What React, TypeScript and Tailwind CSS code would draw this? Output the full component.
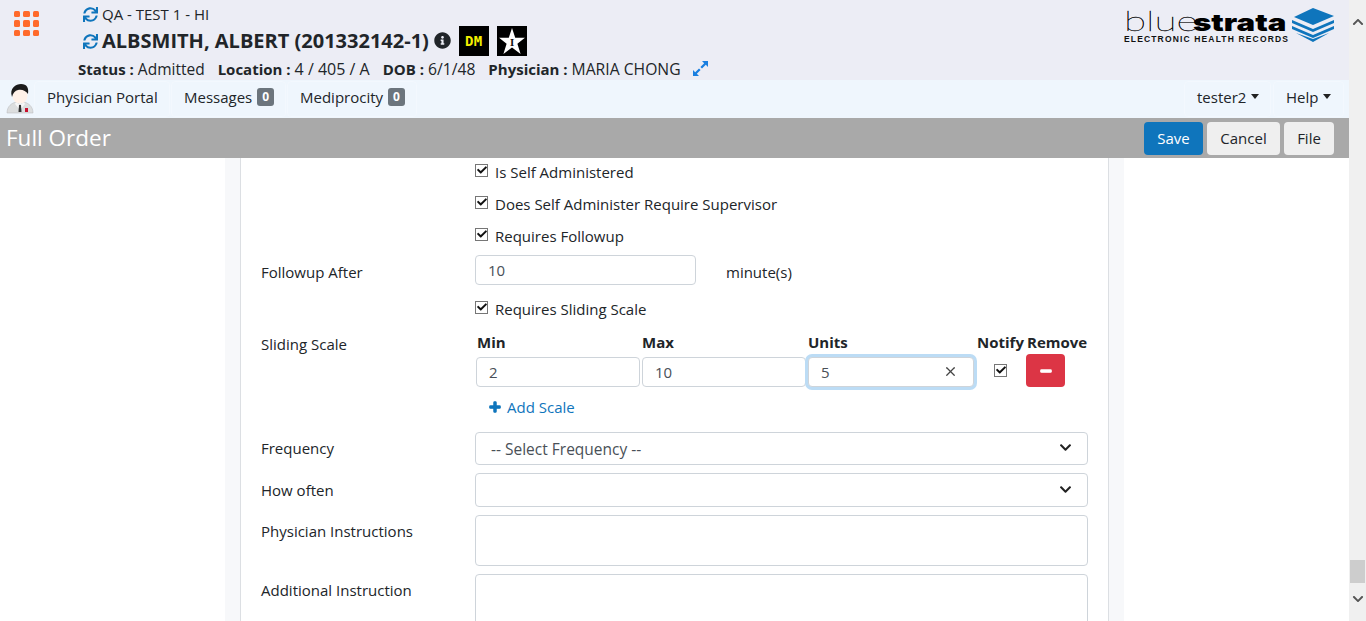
import React from 'react';
import { FaSync, FaInfoCircle, FaPlus, FaMinus, FaCheck, FaChevronUp, FaChevronDown } from 'react-icons/fa';
import { X } from 'lucide-react';

const font = { fontFamily: '"Open Sans", "Noto Sans", sans-serif' };

const Check = ({ label }: { label?: string }) => (
  <label className="flex items-center">
    <span className="w-[13px] h-[13px] border border-[#767676] bg-white flex items-center justify-center -translate-y-[2px]">
      <FaCheck className="w-[10px] h-[10px] text-[#111]" />
    </span>
    {label && <span className="ml-[7px]">{label}</span>}
  </label>
);

const Label = ({ children }: { children?: React.ReactNode }) => (
  <div className="w-[214px] shrink-0">{children}</div>
);

const textInput = 'h-full w-full border border-[#ced4da] rounded-[4px] bg-white px-[12px] text-[#495057] outline-none';

const Select = ({ value, h }: { value?: string; h: string }) => (
  <div className={`${h} flex-1 border border-[#ced4da] rounded-[4px] flex items-center justify-between pl-[15px] pr-[15px] text-[#495057]`}>
    <span className="translate-y-[1px] text-[15.5px]">{value}</span>
    <FaChevronDown className="w-[13px] h-[13px] text-[#222] -translate-y-[1px]" />
  </div>
);

const Logo = () => (
  <div className="flex items-start">
    <div className="flex flex-col items-start w-[165px] mt-[2px]">
      <div className="flex items-baseline h-[20px] text-black">
        <span className="text-[28px] font-thin leading-[20px] w-[69px] inline-block origin-left scale-x-[1.45] [-webkit-text-stroke:0.3px_#000]" style={{ fontFamily: 'Lato, sans-serif' }}>blue</span>
        <span className="text-[24px] font-black leading-[20px] inline-block origin-left scale-x-[1.3]" style={{ fontFamily: 'Inter, sans-serif' }}>strata</span>
      </div>
      <div className="text-[8.5px] leading-[9px] font-bold tracking-[1.15px] text-[#111] mt-[5px] whitespace-nowrap" style={{ fontFamily: '"Liberation Sans", sans-serif' }}>ELECTRONIC HEALTH RECORDS</div>
    </div>
    <svg width="44" height="34" viewBox="0 0 44 34" className="ml-[2px]" fill="#0f75bc">
      <polygon points="22,0 43,8 22,17 3,9" />
      <polygon points="1,12 22,21 43,12 43,15 22,24 1,15" />
      <polygon points="1,18 22,27 43,18 43,21 22,30 1,21" />
      <polygon points="5,25 22,31 38,25 22,34" />
    </svg>
  </div>
);

const Doctor = () => (
  <svg width="30" height="30" viewBox="0 0 30 30">
    <path d="M2 29c0-7 5-10 9-11l4 3 4-3c4 1 9 4 9 11z" fill="#dcdedf" stroke="#b5b7b8" strokeWidth="0.5" />
    <path d="M11 18l4 3 4-3 1 2-5 6-5-6z" fill="#f7f7f7" />
    <path d="M14 21h2l.5 7h-3z" fill="#333" />
    <rect x="20" y="24" width="3" height="4" fill="#c8102e" />
    <ellipse cx="15" cy="11.5" rx="7.5" ry="8" fill="#fff1e8" />
    <path d="M7 13C4 4 11 0 16 0c6 0 8 4 7 10-2-3-6-5-10-4-3 .7-5 3-6 7z" fill="#1c1c1c" />
  </svg>
);

const Expand = () => (
  <svg width="15" height="15" viewBox="0 0 15 15" className="ml-[12px] self-center" fill="#1a7fe0">
    <polygon points="9,0 15,0 15,6 12.8,3.8 9,7.6 7.4,6 11.2,2.2" />
    <polygon points="6,15 0,15 0,9 2.2,11.2 6,7.4 7.6,9 3.8,12.8" />
  </svg>
);

const NavItem = ({ children, className = '' }: { children: React.ReactNode; className?: string }) => (
  <div className={`h-[36px] flex items-center border border-[#f3f8fe] rounded-[4px] ${className}`}><div className="flex items-center -translate-y-[2px]">{children}</div></div>
);

const Badge = ({ n }: { n: number }) => (
  <span className="ml-[5px] w-[17px] h-[18px] bg-[#6c757d] rounded-[3px] text-white text-[12px] font-bold flex items-center justify-center">{n}</span>
);

const Caret = () => <span className="ml-[5px] border-x-[4.5px] border-x-transparent border-t-[5px] border-t-[#222] -translate-y-[1px]" />;

export default function App() {
  return (
    <div className="w-[1366px] h-[621px] overflow-hidden flex bg-white text-[15px] text-[#212529]" style={font}>
      <div className="w-[1349px] flex flex-col shrink-0">
        <header className="h-[80px] bg-[#ecedf5] flex justify-between pl-[14px] pr-[14px]">
          <div className="flex">
            <div className="grid grid-cols-3 gap-[3px] w-[25px] h-[25px] mt-[11px]">
              {Array.from({ length: 9 }).map((_, i) => (
                <span key={i} className="bg-[#ff6a2b] rounded-[1.5px]" />
              ))}
            </div>
            <div className="ml-[39px] flex flex-col">
              <div className="h-[26px] pl-[5px] flex items-center gap-[4px] mt-[1px]">
                <FaSync className="w-[15px] h-[15px] text-[#0f75bc]" />
                <span>QA - TEST 1 - HI</span>
              </div>
              <div className="h-[32px] -mt-[2px] pl-[5px] flex items-center gap-[4px]">
                <FaSync className="w-[15px] h-[15px] text-[#0f75bc]" />
                <span className="text-[20px] font-bold text-[#212529] whitespace-nowrap">ALBSMITH, ALBERT (201332142-1)</span>
                <FaInfoCircle className="w-[17px] h-[17px] ml-[1px] -translate-y-[1px]" />
                <span className="ml-[4px] w-[30px] h-[30px] bg-black text-[#f5f000] text-[14px] tracking-[0.5px] font-bold flex items-center justify-center" style={{ fontFamily: '"DejaVu Sans Mono", monospace' }}>DM</span>
                <span className="ml-[4px] w-[30px] h-[30px] bg-black flex items-center justify-center">
                  <svg width="28" height="28" viewBox="0 0 26 26">
                    <polygon points="13,1 16,10 25,10 18,15.5 21,25 13,19 5,25 8,15.5 1,10 10,10" fill="#fff" />
                    <text x="13" y="18" textAnchor="middle" fontSize="10" fontWeight="700" fontFamily="Liberation Serif, serif" fill="#111">I</text>
                  </svg>
                </span>
              </div>
              <div className="flex items-baseline h-[22px] whitespace-nowrap">
                <b>Status :</b><span className="ml-[4px] text-[15.5px]">Admitted</span>
                <b className="ml-[13px]">Location :</b><span className="ml-[4px] text-[16px]">4 / 405 / A</span>
                <b className="ml-[13px]">DOB :</b><span className="ml-[4px] text-[15.7px]">6/1/48</span>
                <b className="ml-[13px]">Physician :</b><span className="ml-[4px] text-[15.7px]">MARIA CHONG</span>
                <Expand />
              </div>
            </div>
          </div>
          <div className="pt-[8px]"><Logo /></div>
        </header>

        <nav className="h-[38px] bg-[#eff6fd] flex items-center justify-between pl-[5px] pr-[5px]">
          <div className="flex items-center">
            <Doctor />
            <NavItem className="ml-[-1px] w-[136px] pl-[12px]">Physician Portal</NavItem>
            <NavItem className="ml-[1px] w-[115px] pl-[12px]">Messages<Badge n={0} /></NavItem>
            <NavItem className="ml-[1px] w-[130px] pl-[12px]">Mediprocity<Badge n={0} /></NavItem>
          </div>
          <div className="flex items-center">
            <NavItem className="w-[87px] pl-[12px]">tester2<Caret /></NavItem>
            <NavItem className="ml-[2px] w-[71px] pl-[12px]">Help<Caret /></NavItem>
          </div>
        </nav>

        <div className="h-[40px] bg-[#a9a9a9] flex items-center justify-between pl-[6px] pr-[15px]">
          <h1 className="text-[22.5px] text-white">Full Order</h1>
          <div className="flex gap-[4px]">
            <button className="w-[59px] h-[33px] rounded-[4px] bg-[#0f75bc] text-white">Save</button>
            <button className="w-[73px] h-[33px] rounded-[4px] bg-[#efefef] text-[#212529]">Cancel</button>
            <button className="w-[50px] h-[33px] rounded-[4px] bg-[#efefef] text-[#212529]">File</button>
          </div>
        </div>

        <main className="flex-1 min-h-0 overflow-hidden pl-[225px]">
          <div className="w-[899px] h-full bg-[#f7f8fa] px-[15px]">
            <div className="h-full bg-white border-x border-[#dcdfe3] pl-[20px] pr-[20px] pt-[4px] flex flex-col">
              <div className="h-[20px] shrink-0 flex items-center pl-[214px]"><Check label="Is Self Administered" /></div>
              <div className="h-[20px] shrink-0 mt-[12px] flex items-center pl-[214px]"><Check label="Does Self Administer Require Supervisor" /></div>
              <div className="h-[20px] shrink-0 mt-[12px] flex items-center pl-[214px]"><Check label="Requires Followup" /></div>
              <div className="h-[30px] shrink-0 mt-[9px] flex items-center">
                <Label><div className="translate-y-[2px]">Followup After</div></Label>
                <div className="w-[221px] h-full"><input className={textInput} defaultValue="10" /></div>
                <span className="ml-[30px] translate-y-[2px]">minute(s)</span>
              </div>
              <div className="h-[20px] shrink-0 mt-[14px] flex items-center pl-[214px]"><Check label="Requires Sliding Scale" /></div>

              <div className="mt-[14px] shrink-0 flex">
                <div className="w-[214px] shrink-0">Sliding Scale</div>
                <div className="flex flex-col">
                  <div className="flex h-[22px] items-center font-bold whitespace-nowrap pl-[2px] -translate-y-[2px]">
                    <span className="w-[165px]">Min</span>
                    <span className="w-[166px]">Max</span>
                    <span className="w-[169px]">Units</span>
                    <span className="w-[50px]">Notify</span>
                    <span>Remove</span>
                  </div>
                  <div className="flex items-center h-[33px] pl-[1px]">
                    <div className="w-[164px] h-[30px] mt-[1px]"><input className={textInput} defaultValue="2" /></div>
                    <div className="w-[164px] h-[30px] ml-[2px] mt-[1px]"><input className={textInput} defaultValue="10" /></div>
                    <div className="w-[166px] h-[30px] ml-[2px] mt-[1px] relative">
                      <input className={`${textInput} border-[#4a9fe0] ring-[3px] ring-[#bcdcf5]`} defaultValue="5" />
                      <X className="absolute right-[16px] top-[7px] w-[15px] h-[15px] text-[#444]" />
                    </div>
                    <div className="w-[52px] flex justify-center pl-[1px] mt-[1px]"><Check /></div>
                    <button className="w-[39px] h-[33px] rounded-[4px] bg-[#dc3545] flex items-center justify-center -mt-[2px]">
                      <FaMinus className="w-[12px] h-[12px] text-white" stroke="currentColor" strokeWidth={50} />
                    </button>
                  </div>
                  <div className="h-[20px] mt-[9px] pl-[14px] flex items-center text-[#0f75bc]">
                    <FaPlus className="w-[12px] h-[12px] mr-[6px]" stroke="currentColor" strokeWidth={50} />Add Scale
                  </div>
                </div>
              </div>

              <div className="mt-[15px] shrink-0 flex items-start">
                <Label><div className="pt-[5px]">Frequency</div></Label>
                <Select value="-- Select Frequency --" h="h-[33px]" />
              </div>
              <div className="mt-[8px] shrink-0 flex items-start">
                <Label><div className="pt-[6px]">How often</div></Label>
                <Select h="h-[34px]" />
              </div>
              <div className="mt-[8px] shrink-0 flex items-start">
                <Label><div className="pt-[5px]">Physician Instructions</div></Label>
                <textarea className="flex-1 h-[51px] border border-[#ced4da] rounded-[4px] resize-none outline-none" />
              </div>
              <div className="mt-[8px] shrink-0 flex items-start">
                <Label><div className="pt-[5px]">Additional Instruction</div></Label>
                <textarea className="flex-1 h-[60px] border border-[#ced4da] rounded-[4px] resize-none outline-none" />
              </div>
            </div>
          </div>
        </main>
      </div>

      <div className="w-[17px] h-full bg-[#f0f0f0] flex flex-col items-center relative">
        <FaChevronUp className="w-[12px] h-[12px] text-[#555] mt-[16px]" />
        <div className="mt-auto w-[15px] h-[23px] bg-[#cdcdcd] mb-[10px]" />
        <FaChevronDown className="w-[12px] h-[12px] text-[#555] mb-[16px]" />
      </div>
    </div>
  );
}
